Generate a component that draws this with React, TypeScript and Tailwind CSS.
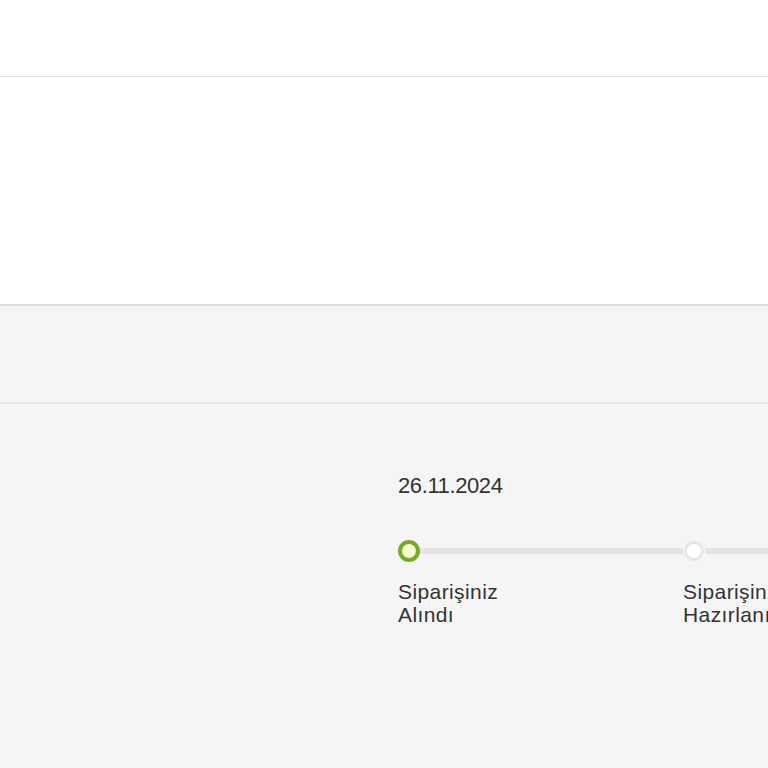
import React from 'react';

const steps = [
  { label: ['Siparişiniz', 'Alındı'], done: true },
  { label: ['Siparişiniz', 'Hazırlanıyor'], done: false },
  { label: ['Kargoya', 'Verildi'], done: false },
];

export default function App() {
  return (
    <div className="w-[768px] h-[768px] overflow-hidden bg-[#f5f5f5] font-['Liberation_Sans',sans-serif] text-[#333]">
      {/* header */}
      <div className="h-[77px] bg-white border-b border-[#e3e3e3]" />
      {/* white content */}
      <div className="h-[229px] bg-white border-b-2 border-[#dcdcdc]" />
      {/* gray band */}
      <div className="h-[98px] bg-[#f5f5f5] border-b-2 border-[#e6e6e6]" />

      {/* order tracking */}
      <div className="pl-[398px] pt-[70px]">
        <p className="text-[22px] leading-6 tracking-[-0.4px]">26.11.2024</p>

        <div className="mt-[42px] flex items-center w-[900px]">
          {steps.map((s, i) => (
            <div key={i} className="flex items-center">
              {s.done ? (
                <div className="w-[22px] h-[22px] rounded-full border-[4px] border-[#76a830] bg-[#f2ffc8] shrink-0" />
              ) : (
                <div className="w-[20px] h-[20px] rounded-full border-[3px] border-[#e6e6e6] bg-white shrink-0 mx-[1px]" />
              )}
              <div className="w-[263px] h-[6px] bg-[#e4e4e4]" />
            </div>
          ))}
        </div>

        <div className="mt-[18px] flex w-[900px]">
          {steps.map((s, i) => (
            <div key={i} className="w-[285px] shrink-0 text-[21px] leading-[23px] tracking-[0.4px]">
              <div>{s.label[0]}</div>
              <div>{s.label[1]}</div>
            </div>
          ))}
        </div>
      </div>
    </div>
  );
}
